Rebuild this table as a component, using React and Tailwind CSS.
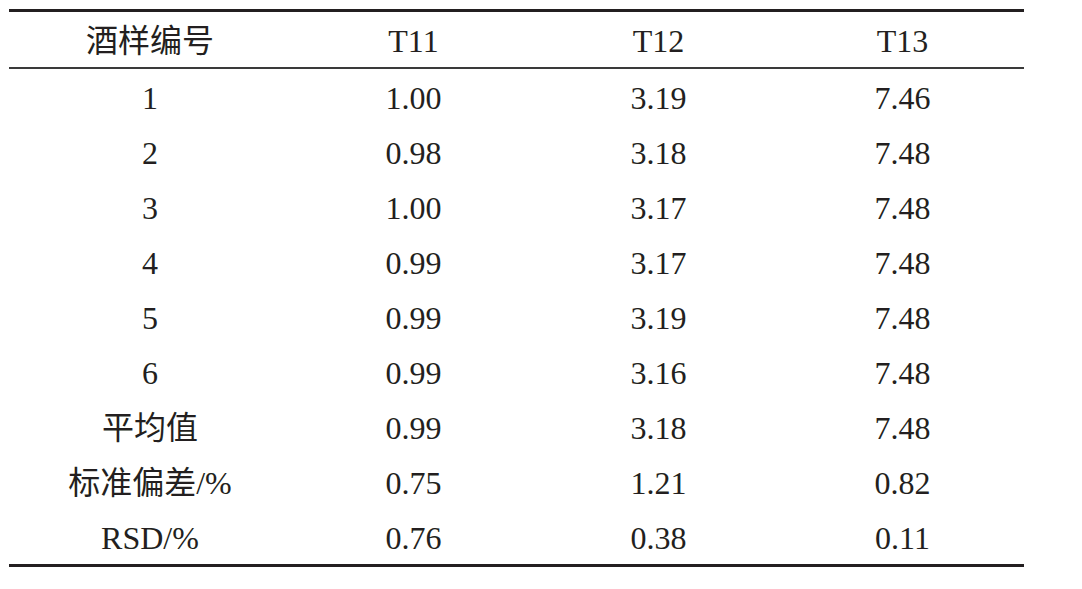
const headers = ["酒样编号", "T11", "T12", "T13"]

const rows = [
  ["1", "1.00", "3.19", "7.46"],
  ["2", "0.98", "3.18", "7.48"],
  ["3", "1.00", "3.17", "7.48"],
  ["4", "0.99", "3.17", "7.48"],
  ["5", "0.99", "3.19", "7.48"],
  ["6", "0.99", "3.16", "7.48"],
  ["平均值", "0.99", "3.18", "7.48"],
  ["标准偏差/%", "0.75", "1.21", "0.82"],
  ["RSD/%", "0.76", "0.38", "0.11"],
]

const cols = "grid grid-cols-[282px_245px_245px_243px]"

export default function App() {
  return (
    <div
      className="w-[1082px] h-[589px] bg-white pt-[9px] pl-[9px] text-[#231f20] text-[32px]"
      style={{ fontFamily: '"Liberation Serif", "Noto Sans CJK SC", serif' }}
    >
      <div className="w-[1015px] border-t-[3px] border-b-[3px] border-[#231f20]">
        {/* header */}
        <div className={`${cols} h-[57px] border-b-2 border-[#3a3a3a]`}>
          {headers.map((h) => (
            <div key={h} className="flex items-center justify-center leading-none pt-[3px]">
              {h}
            </div>
          ))}
        </div>

        {/* body */}
        {rows.map((r, i) => (
          <div key={i} className={`${cols} h-[55px]`}>
            {r.map((c, j) => (
              <div key={j} className="flex items-center justify-center leading-none pt-[3px]">
                {c}
              </div>
            ))}
          </div>
        ))}
      </div>
    </div>
  )
}
